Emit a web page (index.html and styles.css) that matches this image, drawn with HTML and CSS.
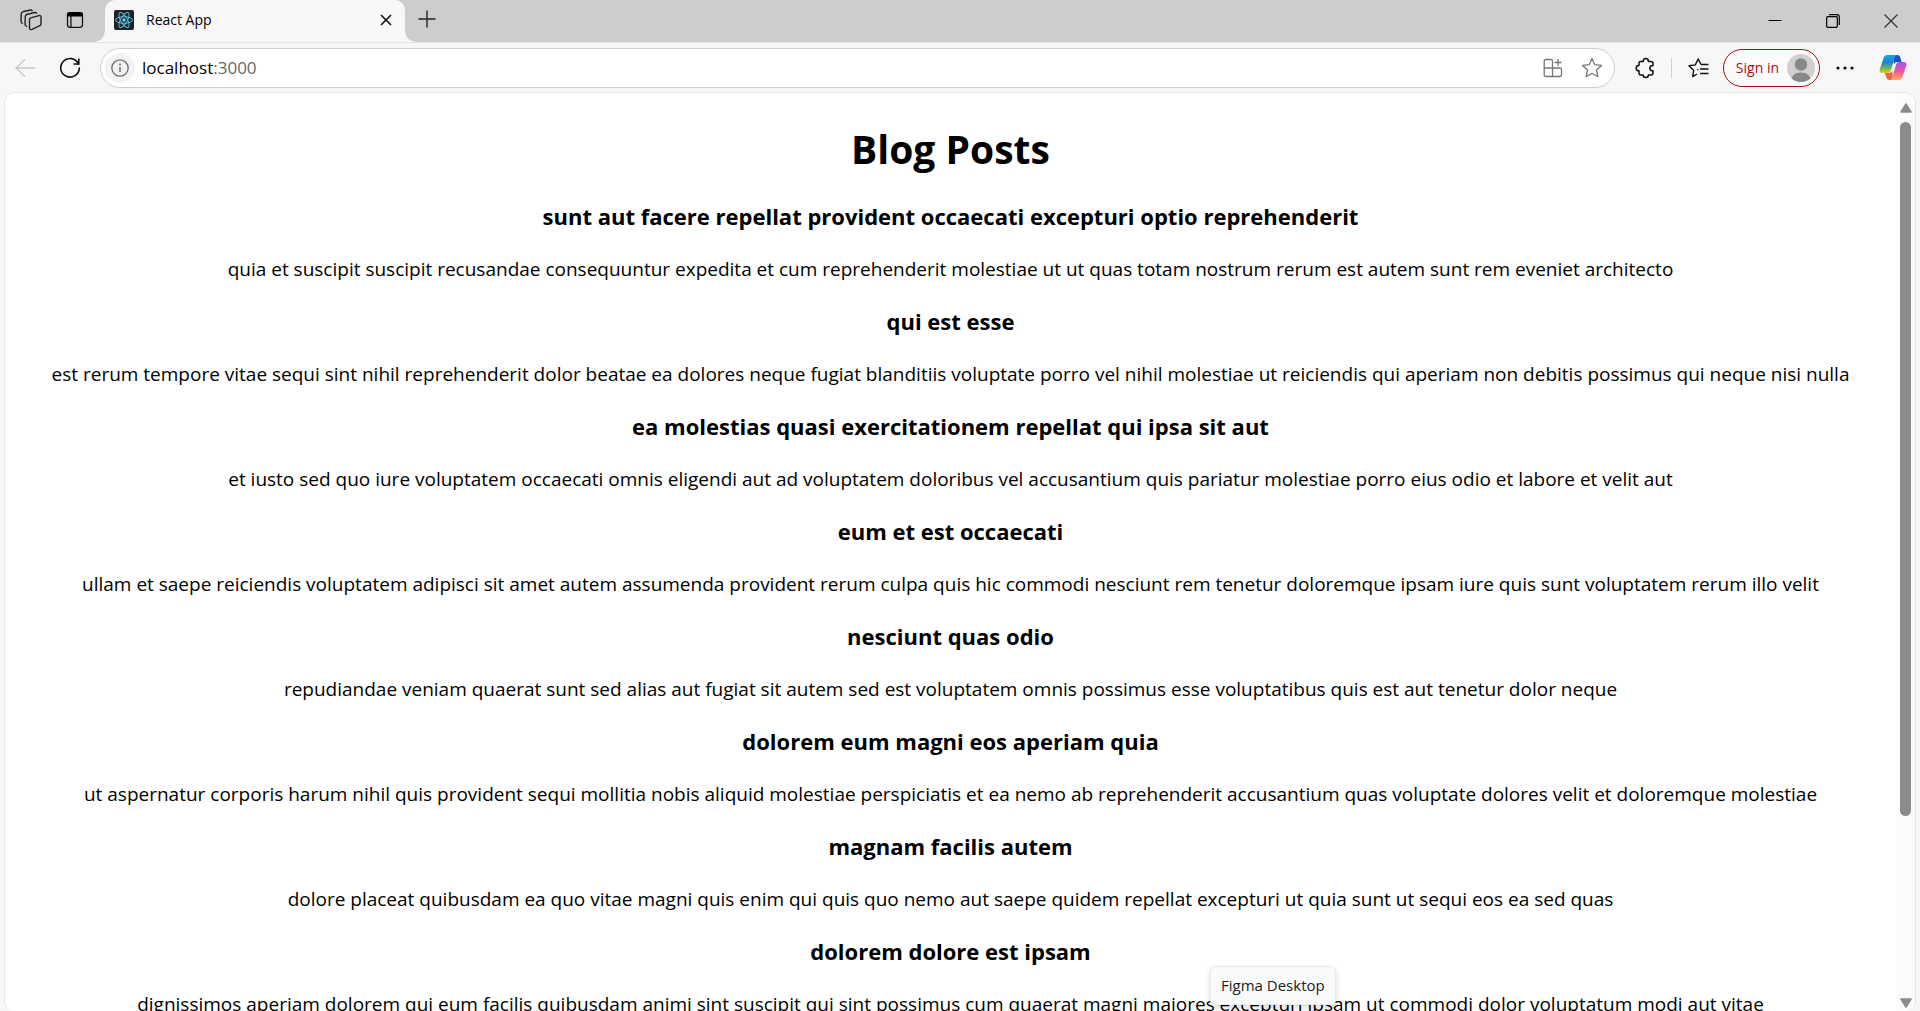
FILE: index.html
```html
<!DOCTYPE html>
<html lang="en">
<head>
<meta charset="utf-8">
<title>React App</title>
<link rel="stylesheet" href="styles.css">
</head>
<body>
<header class="tabstrip">
  <div class="tab-tools">
    <button class="icon-btn" aria-label="Workspaces"><svg width="22" height="22" viewBox="0 0 22 22"><g fill="none" stroke="#222" stroke-width="1.4" stroke-linejoin="round" stroke-linecap="round"><path d="M9.500 10.500 Q9.600 9.200 10.800 8.800 L18.800 6.600 Q21 6.200 21 8.200 V14.700 Q21 16.200 19.800 16.700 L12 20.400 Q9.500 21.200 9.500 18.800Z"/><path d="M6.500 17.300 Q5 16.700 5 15 L5.300 7.300 Q5.400 5.900 6.700 5.500 L14.500 3.500 Q16 3.200 16.500 4.300"/><path d="M2.300 14.300 Q1 13.700 1 12 L1.300 4.600 Q1.400 3.200 2.700 2.800 L10.300 1 Q11.600 .8 12.100 1.700"/></g></svg></button>
    <button class="icon-btn" aria-label="Tab actions"><svg width="18" height="18" viewBox="0 0 20 20"><rect x="1.700" y="1.700" width="16.600" height="16.600" rx="3" fill="none" stroke="#111" stroke-width="1.400"/><path d="M1 6V4.500Q1 1 4.500 1H15.500Q19 1 19 4.500V6Z" fill="#000"/><path d="M5.500 5V18" stroke="#111" stroke-width="1.400"/></svg></button>
  </div>
  <div class="tab">
    <svg class="favicon" width="20" height="20" viewBox="0 0 20 20"><rect width="20" height="20" rx="2" fill="#222"/><g fill="none" stroke="#53c1de" stroke-width="1"><ellipse cx="10" cy="10" rx="8.500" ry="3.300"/><ellipse cx="10" cy="10" rx="8.500" ry="3.300" transform="rotate(60 10 10)"/><ellipse cx="10" cy="10" rx="8.500" ry="3.300" transform="rotate(120 10 10)"/></g><circle cx="10" cy="10" r="1.700" fill="#61dafb"/></svg>
    <span class="tab-title">React App</span>
    <button class="icon-btn" aria-label="Close tab"><svg width="12" height="12" viewBox="0 0 12 12"><path d="M1 1L11 11M11 1L1 11" stroke="#111" stroke-width="1.600"/></svg></button>
  </div>
  <button class="icon-btn new-tab" aria-label="New tab"><svg width="18" height="18" viewBox="0 0 18 18"><path d="M9 0.500V17.500M0.500 9H17.500" stroke="#222" stroke-width="1.400"/></svg></button>
  <div class="window-controls">
    <button class="icon-btn" aria-label="Minimize"><svg width="14" height="14" viewBox="0 0 14 14"><path d="M0.500 6.500H13.500" stroke="#000"/></svg></button>
    <button class="icon-btn" aria-label="Restore"><svg width="14" height="14" viewBox="0 0 14 14"><rect x="0.700" y="2.700" width="10.600" height="10.600" rx="1" fill="none" stroke="#000" stroke-width="1.200"/><path d="M3 0.700H11Q13.300 0.700 13.300 3V11" fill="none" stroke="#000" stroke-width="1.200"/></svg></button>
    <button class="icon-btn" aria-label="Close"><svg width="14" height="14" viewBox="0 0 14 14"><path d="M0.500 0.500L13.500 13.500M13.500 0.500L0.500 13.500" stroke="#333" stroke-width="1.200"/></svg></button>
  </div>
</header>
<nav class="toolbar">
  <div class="nav-tools">
    <button class="icon-btn" aria-label="Back"><svg width="20" height="20" viewBox="0 0 20 20"><path d="M10 1.500L1 10L10 18.500M1 10H20" fill="none" stroke="#c8c8c8" stroke-width="1.400"/></svg></button>
    <button class="icon-btn" aria-label="Refresh"><svg width="22" height="22" viewBox="0 0 22 22"><path d="M19.500 7A9.300 9.300 0 1 0 20.300 11" fill="none" stroke="#111" stroke-width="1.600" stroke-linecap="round"/><path d="M19.800 1.500V7H14.500" fill="none" stroke="#111" stroke-width="1.600"/></svg></button>
  </div>
  <div class="address">
    <button class="icon-btn site-info" aria-label="Site information"><svg width="18" height="18" viewBox="0 0 18 18"><circle cx="9" cy="9" r="8.200" fill="none" stroke="#6b6b6b" stroke-width="1.300"/><path d="M9 8V13" stroke="#6b6b6b" stroke-width="1.500"/><circle cx="9" cy="5.500" r="1" fill="#6b6b6b"/></svg></button>
    <a class="url" href="#">localhost<span class="port">:3000</span></a>
    <button class="icon-btn" aria-label="Apps"><svg width="20" height="20" viewBox="0 0 20 20"><g fill="none" stroke="#777" stroke-width="1.300"><path d="M9.500 18.500H3Q1.200 18.500 1.200 16.700V3Q1.200 1.500 3 1.500H8Q9.500 1.500 9.500 3V18.500M1.200 10H17Q18.500 10 18.500 11.500V16.700Q18.500 18.500 16.700 18.500H9.500M15 1V8M11.500 4.500H18.500"/></g></svg></button>
    <button class="icon-btn" aria-label="Add to favorites"><svg width="22" height="22" viewBox="0 0 22 22"><path d="M11 1.500L13.800 7.700L20.500 8.400L15.500 13L16.900 19.700L11 16.300L5.100 19.700L6.500 13L1.500 8.400L8.200 7.700Z" fill="none" stroke="#777" stroke-width="1.300" stroke-linejoin="round"/></svg></button>
  </div>
  <div class="actions">
    <button class="icon-btn" aria-label="Extensions"><svg width="20" height="22" viewBox="0 0 20 22"><path d="M5.500 4.500H8.200Q8.200 1.500 10.800 1.500Q13.400 1.500 13.400 4.500H16Q18 4.500 18 6.500V8.600Q14.800 8.600 14.800 11.200Q14.800 13.800 18 13.800V16Q18 18 16 18H13.400Q13.400 20.500 10.800 20.500Q8.200 20.500 8.200 18H6Q4 18 4 16V13.800Q1.200 13.800 1.200 11.200Q1.200 8.600 4 8.600V6Q4 4.500 5.500 4.500Z" fill="none" stroke="#111" stroke-width="1.500" stroke-linejoin="round"/></svg></button>
    <span class="divider"></span>
    <button class="icon-btn" aria-label="Favorites"><svg width="21" height="20" viewBox="0 0 21 20"><path d="M9 16L4.700 18.700L5.700 12.300L1 7.700L7.300 6.900L10.200 1L13 6.500M13 6.500H20.500M12 11H20.500M12 15.500H20.500M10.200 11.300L9.500 12" fill="none" stroke="#111" stroke-width="1.400" stroke-linejoin="round"/></svg></button>
    <button class="signin">Sign in <svg width="28" height="28" viewBox="0 0 28 28"><defs><clipPath id="face"><circle cx="14" cy="14" r="14"/></clipPath></defs><g clip-path="url(#face)"><rect width="28" height="28" fill="#d2d0ce"/><circle cx="14" cy="10.500" r="6.200" fill="#8a8886"/><path d="M4 28Q4 18.500 14 18.500Q24 18.500 24 28Z" fill="#8a8886"/></g></svg></button>
    <button class="icon-btn" aria-label="Settings and more"><svg width="18" height="4" viewBox="0 0 18 4"><g fill="#111"><circle cx="2" cy="2" r="1.600"/><circle cx="9" cy="2" r="1.600"/><circle cx="16" cy="2" r="1.600"/></g></svg></button>
    <button class="icon-btn copilot" aria-label="Copilot"><svg width="28" height="28" viewBox="0 0 28 28"><defs><linearGradient id="ca" x1="0" y1="0" x2="0" y2="1"><stop offset="0" stop-color="#16a5e8"/><stop offset=".4" stop-color="#1b80da"/><stop offset=".75" stop-color="#6fbb4a"/><stop offset="1" stop-color="#f3ca13"/></linearGradient><linearGradient id="cb" x1="0" y1="0" x2="0" y2="1"><stop offset="0" stop-color="#a557e8"/><stop offset=".5" stop-color="#ea55a2"/><stop offset="1" stop-color="#ffaa62"/></linearGradient></defs><path d="M14 1H18.500Q20.500 1 21.200 3L22.500 8H18Q15.500 8 14.800 10.500Z" fill="#1c4fc8"/><path d="M14 26H10.500Q8 26 7.300 23.500L6 19H10Q12.500 19 13.300 16.500Z" fill="#ef6347"/><path d="M8.500 1H18Q16.500 1 15.700 3.500L11.800 16.500Q11 19 8.500 19H3Q0 19 0.700 15.500L4.500 4Q5.500 1 8.500 1Z" fill="url(#ca)"/><path d="M19.500 26H10.500Q12.500 26 13.300 23.500L17 10.500Q17.800 8 20.200 8H25Q28.200 8 27.300 11.500L23.500 23Q22.500 26 19.500 26Z" fill="url(#cb)"/></svg></button>
  </div>
</nav>
<div class="viewport">
  <main class="page">
    <h1>Blog Posts</h1>
    <article class="post"><h3>sunt aut facere repellat provident occaecati excepturi optio reprehenderit</h3><p>quia et suscipit suscipit recusandae consequuntur expedita et cum reprehenderit molestiae ut ut quas totam nostrum rerum est autem sunt rem eveniet architecto</p></article>
    <article class="post"><h3>qui est esse</h3><p>est rerum tempore vitae sequi sint nihil reprehenderit dolor beatae ea dolores neque fugiat blanditiis voluptate porro vel nihil molestiae ut reiciendis qui aperiam non debitis possimus qui neque nisi nulla</p></article>
    <article class="post"><h3>ea molestias quasi exercitationem repellat qui ipsa sit aut</h3><p>et iusto sed quo iure voluptatem occaecati omnis eligendi aut ad voluptatem doloribus vel accusantium quis pariatur molestiae porro eius odio et labore et velit aut</p></article>
    <article class="post"><h3>eum et est occaecati</h3><p>ullam et saepe reiciendis voluptatem adipisci sit amet autem assumenda provident rerum culpa quis hic commodi nesciunt rem tenetur doloremque ipsam iure quis sunt voluptatem rerum illo velit</p></article>
    <article class="post"><h3>nesciunt quas odio</h3><p>repudiandae veniam quaerat sunt sed alias aut fugiat sit autem sed est voluptatem omnis possimus esse voluptatibus quis est aut tenetur dolor neque</p></article>
    <article class="post"><h3>dolorem eum magni eos aperiam quia</h3><p>ut aspernatur corporis harum nihil quis provident sequi mollitia nobis aliquid molestiae perspiciatis et ea nemo ab reprehenderit accusantium quas voluptate dolores velit et doloremque molestiae</p></article>
    <article class="post"><h3>magnam facilis autem</h3><p>dolore placeat quibusdam ea quo vitae magni quis enim qui quis quo nemo aut saepe quidem repellat excepturi ut quia sunt ut sequi eos ea sed quas</p></article>
    <article class="post"><h3>dolorem dolore est ipsam</h3><p>dignissimos aperiam dolorem qui eum facilis quibusdam animi sint suscipit qui sint possimus cum quaerat magni maiores excepturi ipsam ut commodi dolor voluptatum modi aut vitae</p></article>
  </main>
  <div class="scrollbar">
    <svg width="12" height="10" viewBox="0 0 12 10"><path d="M6 1L11 9H1Z" fill="#8b8b8b" stroke="#8b8b8b" stroke-width="1.500" stroke-linejoin="round"/></svg>
    <div class="track"><div class="thumb"></div></div>
    <svg width="12" height="10" viewBox="0 0 12 10"><path d="M6 9L11 1H1Z" fill="#8b8b8b" stroke="#8b8b8b" stroke-width="1.500" stroke-linejoin="round"/></svg>
  </div>
</div>
<div class="tooltip" role="tooltip">Figma Desktop</div>
</body>
</html>
```
FILE: styles.css
```css
* { box-sizing: border-box; }
body {
  margin: 0;
  height: 100vh;
  overflow: hidden;
  display: flex;
  flex-direction: column;
  background: #f7f7f7;
  color: #000;
  font-family: "Segoe UI", "Open Sans", "Noto Sans", sans-serif;
  font-size: 19px;
}
svg { display: block; flex: none; }
button { font: inherit; }
.icon-btn {
  display: flex;
  align-items: center;
  justify-content: center;
  border: 0;
  padding: 0;
  background: none;
}

.tabstrip {
  display: flex;
  align-items: flex-end;
  flex: none;
  height: 42px;
  background: #cdcdcd;
}
.tab-tools {
  display: flex;
  align-items: center;
  gap: 24px;
  width: 105px;
  height: 42px;
  padding: 0 0 2px 20px;
}
.tab {
  position: relative;
  display: flex;
  align-items: center;
  gap: 12px;
  width: 300px;
  height: 42px;
  padding: 0 13px 2px 9px;
  border-radius: 10px 10px 0 0;
  background: #f7f7f7;
}
.tab::before,
.tab::after {
  content: "";
  position: absolute;
  bottom: 0;
  width: 10px;
  height: 10px;
}
.tab::before {
  right: 100%;
  background: radial-gradient(circle at 0 0, #cdcdcd 9px, #f7f7f7 10px);
}
.tab::after {
  left: 100%;
  background: radial-gradient(circle at 100% 0, #cdcdcd 9px, #f7f7f7 10px);
}
.tab-title { flex: 1; font-size: 14px; line-height: 20px; }
.new-tab { height: 42px; padding: 0 0 4px 13px; }
.window-controls {
  display: flex;
  align-items: center;
  gap: 44px;
  height: 42px;
  margin-left: auto;
  padding-right: 22px;
}

.toolbar {
  display: flex;
  align-items: center;
  flex: none;
  height: 50px;
  border-top: 1px solid #e4e4e4;
}
.nav-tools {
  display: flex;
  align-items: center;
  gap: 24px;
  width: 100px;
  padding-left: 15px;
}
.address {
  display: flex;
  align-items: center;
  gap: 18px;
  flex: 1;
  height: 40px;
  padding: 0 11px 0 4px;
  border: 1px solid #cfcfcf;
  border-radius: 20px;
  background: #fff;
}
.site-info {
  width: 30px;
  height: 30px;
  border-radius: 50%;
  background: #f3f3f3;
}
.url {
  flex: 1;
  margin-left: -11px;
  color: #000;
  font-size: 17px;
  line-height: 24px;
  text-decoration: none;
}
.port { color: #666; }
.actions {
  display: flex;
  align-items: center;
  gap: 16px;
  padding: 0 13px 0 20px;
}
.divider { width: 1px; height: 20px; background: #cfcfcf; }
.signin {
  display: flex;
  align-items: center;
  gap: 8px;
  height: 38px;
  margin-left: -2px;
  padding: 0 4px 0 12px;
  border: 1px solid #a80f17;
  border-radius: 19px;
  background: #fbfbfb;
  color: #a80f17;
  font-size: 14px;
}
.copilot { margin-left: 9px; }

.viewport {
  display: flex;
  flex: 1;
  min-height: 0;
  margin: 0 4px;
  overflow: hidden;
  border: 1px solid #e6e6e6;
  border-bottom: 0;
  border-radius: 10px;
  background: #fff;
}
.page {
  flex: 1;
  padding-top: 29px;
  text-align: center;
}
h1, h3, p { margin: 0; white-space: nowrap; }
h1 {
  margin-bottom: 24px;
  font-size: 39px;
  line-height: 54px;
}
.post { margin-bottom: 22px; }
h3 {
  margin-bottom: 23px;
  font-size: 22px;
  line-height: 32px;
}
p { line-height: 28px; }
.scrollbar {
  display: flex;
  flex-direction: column;
  align-items: center;
  gap: 9px;
  flex: none;
  width: 19px;
  padding: 10px 0 3px;
  background: #fcfcfc;
}
.track { flex: 1; width: 11px; }
.thumb { height: 80%; border-radius: 6px; background: #8b8b8b; }
.tooltip {
  position: absolute;
  left: 1210px;
  bottom: 6px;
  padding: 0 10px;
  border: 1px solid #ebebeb;
  border-radius: 5px;
  background: #f9fafa;
  box-shadow: 0 3px 6px rgba(0, 0, 0, .14);
  color: #222;
  font-size: 15px;
  line-height: 37px;
}
```
